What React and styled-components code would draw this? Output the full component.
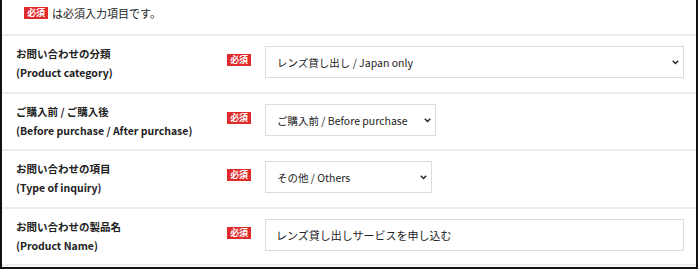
import React from "react";
import styled, { createGlobalStyle } from "styled-components";

const GlobalStyle = createGlobalStyle`
  html, body {
    margin: 0;
    padding: 0;
    background: #fff;
  }
  body {
    font-family: "Noto Sans CJK JP", "Noto Sans", sans-serif;
    color: #222;
  }
`;

const Frame = styled.div`
  width: 698px;
  height: 269px;
  box-sizing: border-box;
  border-left: 2px solid #111;
  border-right: 2px solid #111;
  border-bottom: 2px solid #111;
  overflow: hidden;
  background: #fff;
`;

const Notice = styled.div`
  display: flex;
  align-items: center;
  gap: 4px;
  height: 36px;
  padding: 0 0 9px 22px;
  box-sizing: border-box;
  border-bottom: 2px solid #ececec;
  font-size: 11px;
  color: #222;
`;

const Badge = styled.span`
  display: inline-flex;
  align-items: center;
  justify-content: center;
  width: 24px;
  height: 12px;
  background: #e02b2b;
  color: #fff;
  font-size: 9px;
  font-weight: 700;
  line-height: 1;
  letter-spacing: -0.3px;
  margin-top: ${(p) => (p.$inRow ? "6px" : "0")};
`;

const Row = styled.div`
  display: grid;
  grid-template-columns: 211px 38px 1fr;
  align-items: start;
  height: ${(p) => p.$h}px;
  box-sizing: border-box;
  padding: 8px 12px 0 14px;
  border-bottom: 2px solid #ececec;
`;

const Label = styled.div`
  font-size: 10.5px;
  font-weight: 700;
  line-height: 19px;
  color: #222;
  white-space: nowrap;
`;

const Field = styled.div`
  padding-top: 2px;
  display: flex;
`;

const Select = styled.div`
  position: relative;
  width: ${(p) => p.$w};
  height: 32px;
  box-sizing: border-box;
  border: 1px solid #dcdcdc;
  display: flex;
  align-items: center;
  padding-left: 11px;
  font-size: 10.5px;
  color: #222;
  background: #fff;
  white-space: nowrap;
`;

const Chevron = styled.svg`
  position: absolute;
  right: 4px;
  top: 50%;
  margin-top: -2px;
`;

const Input = styled.div`
  width: 100%;
  height: 32px;
  box-sizing: border-box;
  border: 1px solid #dcdcdc;
  display: flex;
  align-items: center;
  padding-left: 10px;
  font-size: 11px;
  color: #222;
  white-space: nowrap;
`;

const Arrow = () => (
  <Chevron width="7" height="5" viewBox="0 0 7 5">
    <path d="M0.8 0.8l2.7 2.7 2.7-2.7" fill="none" stroke="#222" strokeWidth="1.5" />
  </Chevron>
);

const rows = [
  { ja: "お問い合わせの分類", en: "(Product category)", value: "レンズ貸し出し / Japan only", kind: "select", w: "100%", h: 58 },
  { ja: "ご購入前 / ご購入後", en: "(Before purchase / After purchase)", value: "ご購入前 / Before purchase", kind: "select", w: "171px", h: 57 },
  { ja: "お問い合わせの項目", en: "(Type of inquiry)", value: "その他 / Others", kind: "select", w: "167px", h: 58 },
  { ja: "お問い合わせの製品名", en: "(Product Name)", value: "レンズ貸し出しサービスを申し込む", kind: "input", h: 57 },
];

const App = () => (
  <>
    <GlobalStyle />
    <Frame>
      <Notice>
        <Badge>必須</Badge>
        <span>は必須入力項目です。</span>
      </Notice>
      {rows.map((r) => (
        <Row key={r.ja} $h={r.h}>
          <Label>
            {r.ja}
            <br />
            {r.en}
          </Label>
          <div>
            <Badge $inRow>必須</Badge>
          </div>
          <Field>
            {r.kind === "select" ? (
              <Select $w={r.w}>
                {r.value}
                <Arrow />
              </Select>
            ) : (
              <Input>{r.value}</Input>
            )}
          </Field>
        </Row>
      ))}
    </Frame>
  </>
);

export default App;
